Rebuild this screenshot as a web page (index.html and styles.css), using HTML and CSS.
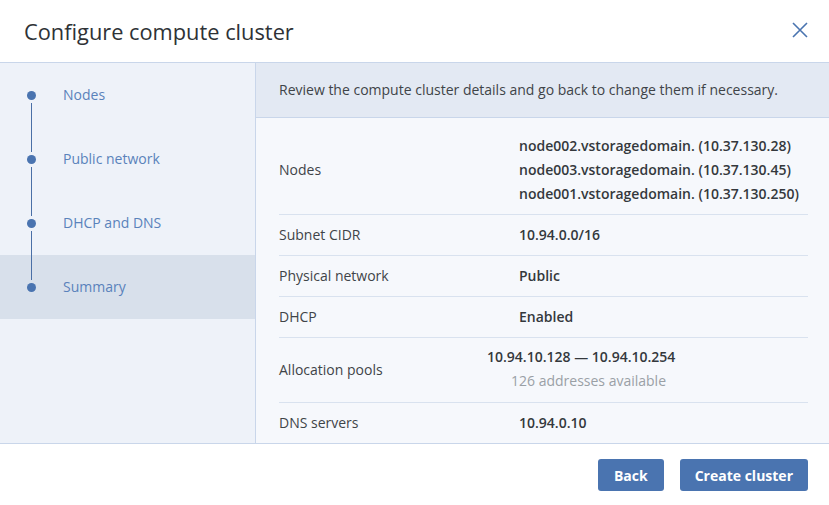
FILE: index.html
```html
<!DOCTYPE html>
<html>
<head>
<meta charset="utf-8">
<link rel="stylesheet" href="styles.css">
</head>
<body>
<div class="dialog">
  <div class="header">
    <h1 class="title">Configure compute cluster</h1>
    <button class="close" aria-label="Close">
      <svg width="16" height="16" viewBox="0 0 16 16"><path d="M1 1 L15 15 M15 1 L1 15" stroke="#4a74b0" stroke-width="1.6" fill="none"/></svg>
    </button>
  </div>
  <div class="main">
    <div class="sidebar">
      <div class="step first"><div class="marker"><span class="seg"></span><span class="dot"></span><span class="seg"></span></div><span class="step-label">Nodes</span></div>
      <div class="step"><div class="marker"><span class="seg"></span><span class="dot"></span><span class="seg"></span></div><span class="step-label">Public network</span></div>
      <div class="step"><div class="marker"><span class="seg"></span><span class="dot"></span><span class="seg"></span></div><span class="step-label">DHCP and DNS</span></div>
      <div class="step last active"><div class="marker"><span class="seg"></span><span class="dot"></span><span class="seg"></span></div><span class="step-label">Summary</span></div>
    </div>
    <div class="content">
      <div class="intro">Review the compute cluster details and go back to change them if necessary.</div>
      <div class="details">
        <div class="row tall">
          <div class="label">Nodes</div>
          <div class="value lines">
            <div>node002.vstoragedomain. (10.37.130.28)</div>
            <div>node003.vstoragedomain. (10.37.130.45)</div>
            <div>node001.vstoragedomain. (10.37.130.250)</div>
          </div>
        </div>
        <div class="row"><div class="label">Subnet CIDR</div><div class="value">10.94.0.0/16</div></div>
        <div class="row"><div class="label">Physical network</div><div class="value">Public</div></div>
        <div class="row"><div class="label">DHCP</div><div class="value">Enabled</div></div>
        <div class="row pools">
          <div class="label">Allocation pools</div>
          <div class="value pool">
            <div>10.94.10.128 — 10.94.10.254</div>
            <div class="muted">126 addresses available</div>
          </div>
        </div>
        <div class="row last"><div class="label">DNS servers</div><div class="value">10.94.0.10</div></div>
      </div>
    </div>
  </div>
  <div class="footer">
    <button class="btn back">Back</button>
    <button class="btn create">Create cluster</button>
  </div>
</div>
</body>
</html>
```
FILE: styles.css
```css
* { box-sizing: border-box; }
html, body { margin: 0; padding: 0; }
body {
  font-family: "Open Sans", "Noto Sans", sans-serif;
  font-size: 14px;
  color: #3a3f44;
  background: #fff;
}
.dialog {
  width: 829px;
  height: 505px;
  display: flex;
  flex-direction: column;
  background: #fff;
}
.header {
  height: 63px;
  border-bottom: 1px solid #c9d6ea;
  display: flex;
  align-items: center;
  justify-content: space-between;
  padding: 0 21px 0 24px;
  flex-shrink: 0;
}
.title {
  margin: 0;
  font-size: 21.8px;
  font-weight: 400;
  color: #2e3236;
}
.close {
  border: 0;
  background: none;
  padding: 0;
  width: 16px;
  height: 16px;
  display: flex;
  cursor: pointer;
  margin-bottom: 2px;
}
.main {
  height: 380px;
  display: flex;
  flex-shrink: 0;
}
.sidebar {
  width: 256px;
  background: #eef2f9;
  border-right: 1px solid #c9d6ea;
  flex-shrink: 0;
}
.step {
  height: 64px;
  display: flex;
  align-items: center;
  color: #5a82bb;
}
.step.active { background: #d8e0eb; }
.marker {
  width: 63px;
  height: 64px;
  display: flex;
  flex-direction: column;
  align-items: center;
  gap: 3px;
  padding-right: 1px;
}
.seg {
  flex: 1;
  width: 1px;
  background: #4a6fa6;
}
.step.first .seg:first-child,
.step.last .seg:last-child { visibility: hidden; }
.dot {
  width: 9px;
  height: 9px;
  border-radius: 50%;
  background: #4a74b0;
  flex-shrink: 0;
}
.step-label { font-size: 14px; padding-bottom: 2px; }
.content {
  flex: 1;
  display: flex;
  flex-direction: column;
  min-width: 0;
}
.intro {
  height: 55px;
  background: #e3e9f3;
  border-bottom: 1px solid #c9d6ea;
  display: flex;
  align-items: center;
  padding: 0 0 2px 23px;
  color: #3f4448;
}
.details {
  flex: 1;
  background: #f6f8fc;
  padding: 0 21px 0 23px;
}
.row {
  height: 41px;
  display: grid;
  grid-template-columns: 240px 1fr;
  align-items: center;
  border-bottom: 1px solid #d9e2ef;
  padding-bottom: 2px;
}
.row.tall { height: 97px; padding: 6px 0 0; }
.row.pools { height: 65px; padding-bottom: 2px; }
.row.last { border-bottom: 0; height: 40px; }
.label { color: #3f4448; }
.value {
  font-weight: 600;
  color: #34383c;
}
.lines { margin-top: 2px; }
.lines div { line-height: 24px; }
.pool {
  margin-left: -32px;
  line-height: 24px;
}
.pool .muted {
  font-weight: 400;
  color: #9aa0a6;
  padding-left: 24px;
}
.footer {
  flex: 1;
  border-top: 1px solid #c9d6ea;
  display: flex;
  justify-content: flex-end;
  align-items: flex-start;
  padding: 15px 21px 0 0;
  gap: 16px;
}
.btn {
  height: 32px;
  padding: 0 16px;
  border: 0;
  border-radius: 3px;
  background: #4a74b0;
  color: #fff;
  font-family: inherit;
  font-size: 14px;
  font-weight: 700;
  cursor: pointer;
}
.btn.create { padding: 0 15px; }
```
